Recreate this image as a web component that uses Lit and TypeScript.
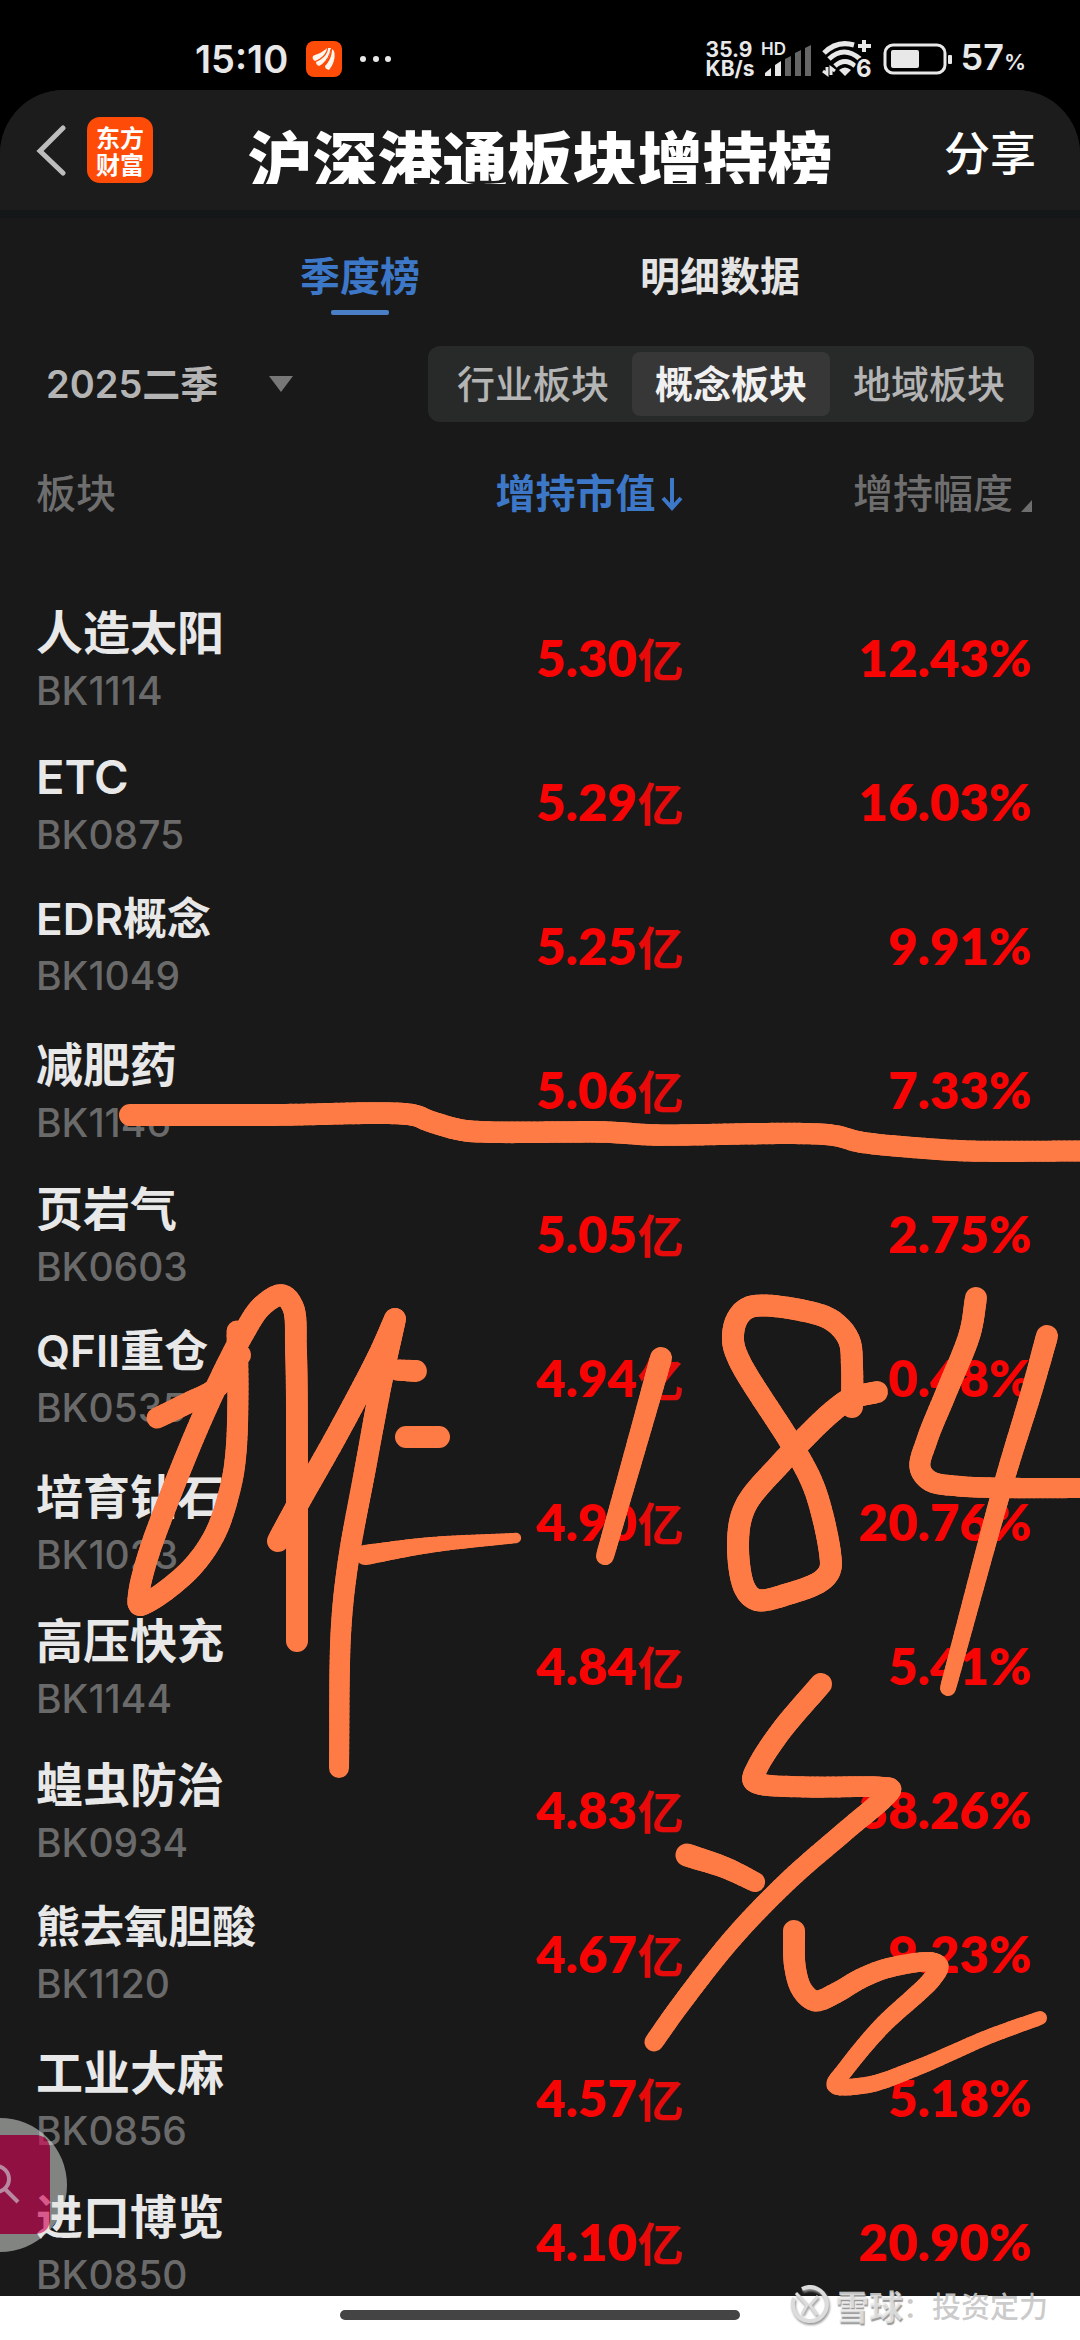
import { LitElement, html, css, svg } from "lit";
import { customElement, property, state } from "lit/decorators.js";
import { classMap } from "lit/directives/class-map.js";

interface Sector {
  name: string;
  code: string;
  value: string;
  percent: string;
}

const SECTORS: Sector[] = [
  { name: "人造太阳", code: "BK1114", value: "5.30", percent: "12.43%" },
  { name: "ETC", code: "BK0875", value: "5.29", percent: "16.03%" },
  { name: "EDR概念", code: "BK1049", value: "5.25", percent: "9.91%" },
  { name: "减肥药", code: "BK1146", value: "5.06", percent: "7.33%" },
  { name: "页岩气", code: "BK0603", value: "5.05", percent: "2.75%" },
  { name: "QFII重仓", code: "BK0535", value: "4.94", percent: "0.48%" },
  { name: "培育钻石", code: "BK1023", value: "4.90", percent: "20.76%" },
  { name: "高压快充", code: "BK1144", value: "4.84", percent: "5.41%" },
  { name: "蝗虫防治", code: "BK0934", value: "4.83", percent: "38.26%" },
  { name: "熊去氧胆酸", code: "BK1120", value: "4.67", percent: "9.23%" },
  { name: "工业大麻", code: "BK0856", value: "4.57", percent: "5.18%" },
  { name: "进口博览", code: "BK0850", value: "4.10", percent: "20.90%" },
];

type Point = [number, number];

interface InkStroke {
  from: number;
  to: number;
  points: Point[];
}

/* Pen strokes: width at both ends and the points the pen passes through. */
const INK: InkStroke[] = [
  { from: 22, to: 21, points: [[130, 1115], [270, 1115], [413, 1115], [429, 1121], [461, 1130], [486, 1132], [605, 1132], [622, 1133], [654, 1135], [831, 1135], [860, 1142], [919, 1148], [970, 1151], [1085, 1151]] },
  { from: 21, to: 22, points: [[237, 1331], [238, 1389], [236, 1452], [231, 1485], [216, 1532], [195, 1564], [169, 1588], [148, 1602], [139, 1605], [139, 1592], [148, 1556], [172, 1491], [207, 1407], [241, 1338], [262, 1306], [282, 1295], [293, 1307], [296, 1350], [297, 1480], [297, 1641]] },
  { from: 21, to: 22, points: [[157, 1418], [190, 1402], [215, 1389], [240, 1355]] },
  { from: 22, to: 22, points: [[395, 1319], [379, 1355], [338, 1433], [298, 1504], [278, 1541]] },
  { from: 22, to: 20, points: [[395, 1319], [382, 1379], [365, 1470], [348, 1563], [341, 1630], [339, 1768]] },
  { from: 21, to: 22, points: [[396, 1370], [416, 1371]] },
  { from: 22, to: 22, points: [[406, 1437], [439, 1437]] },
  { from: 20, to: 10, points: [[365, 1555], [430, 1545], [516, 1538]] },
  { from: 22, to: 18, points: [[661, 1358], [636, 1447], [605, 1556]] },
  { from: 22, to: 22, points: [[852, 1407], [852, 1367], [849, 1340], [833, 1321], [805, 1311], [750, 1307], [737, 1319], [733, 1340], [739, 1360], [795, 1450], [815, 1490], [830, 1553], [830, 1570], [821, 1581], [788, 1594], [757, 1600], [745, 1589], [738, 1543], [745, 1507], [781, 1463], [833, 1411], [852, 1398], [877, 1392]] },
  { from: 22, to: 20, points: [[976, 1298], [970, 1333], [946, 1393], [927, 1440], [920, 1468], [930, 1481], [957, 1486], [1015, 1488], [1086, 1488]] },
  { from: 22, to: 16, points: [[1047, 1336], [1032, 1390], [1004, 1482], [948, 1688]] },
  { from: 22, to: 19, points: [[821, 1684], [781, 1731], [758, 1766], [753, 1780], [760, 1784], [808, 1787], [880, 1787], [891, 1789], [884, 1798], [843, 1833], [788, 1881], [733, 1938], [678, 2008], [654, 2042]] },
  { from: 23, to: 20, points: [[687, 1855], [726, 1868], [755, 1882]] },
  { from: 22, to: 14, points: [[794, 1931], [795, 1967], [802, 1990], [815, 2001], [836, 1993], [860, 1979], [888, 1968], [932, 1962], [939, 1966], [932, 1979], [881, 2027], [845, 2070], [835, 2085], [867, 2085], [919, 2067], [988, 2037], [1040, 2018]] },
];

interface Segment {
  a: Point;
  b: Point;
  width: number;
}

/* Samples a smooth curve through the points and narrows it along the way. */
function inkSegments(stroke: InkStroke): Segment[] {
  const p = stroke.points;
  const n = p.length;
  const dist = (a: Point, b: Point) => Math.hypot(b[0] - a[0], b[1] - a[1]);
  const t: number[] = [0];
  for (let i = 1; i < n; i++) t.push(t[i - 1] + Math.sqrt(dist(p[i - 1], p[i])));
  const slope = (i: number, axis: number): number => {
    if (i === 0) return (p[1][axis] - p[0][axis]) / (t[1] - t[0]);
    if (i === n - 1) return (p[i][axis] - p[i - 1][axis]) / (t[i] - t[i - 1]);
    const h0 = t[i] - t[i - 1];
    const h1 = t[i + 1] - t[i];
    const s0 = (p[i][axis] - p[i - 1][axis]) / h0;
    const s1 = (p[i + 1][axis] - p[i][axis]) / h1;
    return (s0 * h1 + s1 * h0) / (h0 + h1);
  };
  const samples: Point[] = [p[0]];
  for (let i = 0; i < n - 1; i++) {
    const h = t[i + 1] - t[i];
    const steps = Math.max(4, Math.ceil(dist(p[i], p[i + 1]) / 5));
    for (let s = 1; s <= steps; s++) {
      const u = s / steps;
      const at = (axis: number) =>
        (2 * u ** 3 - 3 * u ** 2 + 1) * p[i][axis] +
        (u ** 3 - 2 * u ** 2 + u) * h * slope(i, axis) +
        (3 * u ** 2 - 2 * u ** 3) * p[i + 1][axis] +
        (u ** 3 - u ** 2) * h * slope(i + 1, axis);
      samples.push([at(0), at(1)]);
    }
  }
  const last = samples.length - 1;
  return samples.slice(1).map((b, i) => ({
    a: samples[i],
    b,
    width: stroke.from + ((stroke.to - stroke.from) * i) / last,
  }));
}

@customElement("status-bar")
export class StatusBar extends LitElement {
  static styles = css`
    :host {
      display: flex;
      justify-content: space-between;
      align-items: center;
      height: 90px;
      padding: 28px 54px 0 195px;
      box-sizing: border-box;
      color: #e8e8e8;
      font-family: Inter, "Noto Sans CJK SC", sans-serif;
    }
    .side {
      display: flex;
      align-items: center;
    }
    .time {
      font-size: 38px;
      line-height: 40px;
      font-weight: 600;
    }
    .app {
      margin: 0 17px 0 18px;
    }
    .speed {
      font-size: 21px;
      line-height: 19px;
      font-weight: 700;
    }
    .signal {
      margin: 0 9px 0 6px;
    }
    .battery {
      margin: 0 8px 0 11px;
    }
    .level {
      font-size: 36px;
      line-height: 40px;
      font-weight: 600;
    }
    .unit {
      font-size: 22px;
    }
    .hd {
      font: 600 17px Inter, sans-serif;
    }
    .six {
      font: 700 24px Inter, sans-serif;
    }
  `;

  render() {
    return html`
      <div class="side">
        <span class="time">15:10</span>
        <svg class="app" width="36" height="36" viewBox="0 0 36 36">
          <rect width="36" height="36" rx="8" fill="#ff4b08" />
          <path d="M7 15c4-2 9-3 14-8 0 5-6 11-12 13-2-1-3-3-2-5z" fill="#fff6ee" />
          <path d="M22 7l3 0c0 8-5 14-12 18-2-1-3-2-3-4 7-3 12-8 12-14z" fill="#fff6ee" />
          <path d="M26 8l2 2c2 7-1 14-5 19-3-1-4-2-4-4 4-4 7-10 7-17z" fill="#fff6ee" />
          <path d="M17 23c4-4 7-9 8-15" fill="none" stroke="#ff4b08" />
        </svg>
        <svg width="34" height="8" viewBox="0 0 34 8" fill="#e8e8e8">
          <circle cx="4" cy="4" r="3" />
          <circle cx="17" cy="4" r="3" />
          <circle cx="29" cy="4" r="3" />
        </svg>
      </div>
      <div class="side">
        <div class="speed">35.9<br />KB/s</div>
        <svg class="signal" width="52" height="38" viewBox="0 0 52 38" fill="#e8e8e8">
          <text class="hd" x="0" y="15">HD</text>
          <path d="M4 36v-3l6-5v8z" />
          <path d="M14 36V25l6-4v15z" />
          <g fill="#666">
            <path d="M24 36V19l6-3v20z" />
            <path d="M34 36V13l6-3v26z" />
            <path d="M44 36V8l6-3v31z" />
          </g>
        </svg>
        <svg width="50" height="40" viewBox="0 0 50 40" fill="none" stroke="#e8e8e8">
          <path d="M2 14q13-13 30-8" stroke-width="5" />
          <path d="M7 20q15-14 31 0" stroke-width="5" />
          <path d="M13 27q10-9 20 0" stroke-width="5" />
          <path d="M17 31q6-5 12 0l-6 6z" fill="#e8e8e8" stroke="none" />
          <path d="M42 1v12M36 7h13" stroke-width="4" />
          <path d="M5 28v7l-4-3M9 36v-7l4 3" stroke-width="3" />
          <text class="six" x="34" y="38" fill="#e8e8e8" stroke="#000" stroke-width="4" paint-order="stroke">6</text>
        </svg>
        <svg class="battery" width="70" height="32" viewBox="0 0 70 32">
          <rect x="2" y="2" width="60" height="28" rx="8" fill="none" stroke="#e8e8e8" stroke-width="3" />
          <rect x="8" y="7" width="28" height="18" rx="2" fill="#e8e8e8" />
          <rect x="65" y="12" width="4" height="9" rx="1" fill="#e8e8e8" />
        </svg>
        <span class="level">57<span class="unit">%</span></span>
      </div>
    `;
  }
}

@customElement("nav-header")
export class NavHeader extends LitElement {
  static styles = css`
    :host {
      display: grid;
      grid-template-columns: 1fr auto 1fr;
      align-items: center;
      height: 120px;
      padding: 0 36px;
      background: #1c1c1c;
      border-bottom: 8px solid #141717;
      font-family: "Noto Sans CJK SC", sans-serif;
      color: #fff;
    }
    button {
      background: none;
      border: 0;
      padding: 0;
      margin: 0;
      color: inherit;
      font-family: inherit;
      cursor: pointer;
    }
    .left {
      display: flex;
      align-items: center;
      gap: 18px;
    }
    .back {
      display: flex;
    }
    .brand {
      display: grid;
      place-content: center;
      width: 66px;
      height: 66px;
      border-radius: 13px;
      background: #ff4b08;
      color: #fff;
      font-size: 24px;
      line-height: 27px;
      font-weight: 700;
      text-decoration: none;
    }
    .title {
      height: 56px;
      margin: 12px 0 0;
      overflow: hidden;
      font-size: 65px;
      line-height: 60px;
      font-weight: 900;
    }
    .share {
      justify-self: end;
      padding-right: 8px;
      font-size: 46px;
      line-height: 56px;
      font-weight: 500;
    }
  `;

  @property() heading = "";

  render() {
    return html`
      <div class="left">
        <button class="back" aria-label="返回">
          <svg width="33" height="52" viewBox="0 0 33 52" fill="none" stroke="#bdbdbd" stroke-width="5" stroke-linecap="round">
            <path d="M27 4L4 27l23 22" />
          </svg>
        </button>
        <a class="brand" href="#"><span>东方</span><span>财富</span></a>
      </div>
      <h1 class="title">${this.heading}</h1>
      <button class="share">分享</button>
    `;
  }
}

@customElement("sector-table")
export class SectorTable extends LitElement {
  static styles = css`
    :host {
      display: block;
      padding: 0 48px 0 36px;
      font-family: Inter, "Noto Sans CJK SC", sans-serif;
    }
    table {
      width: 100%;
      table-layout: fixed;
      border-collapse: collapse;
    }
    th,
    td {
      padding: 0;
      text-align: right;
      font-weight: 500;
    }
    .first {
      width: 35%;
      text-align: left;
    }
    .second {
      width: 30%;
    }
    .head th {
      height: 144px;
      padding-bottom: 20px;
      color: #6e6e6e;
      font-size: 40px;
      line-height: 60px;
    }
    .sort {
      display: inline-flex;
      align-items: center;
      padding: 0;
      border: 0;
      background: none;
      color: inherit;
      font: inherit;
      cursor: pointer;
    }
    .sort.active {
      color: #3d78c8;
      font-weight: 700;
    }
    .arrow {
      margin-left: 6px;
    }
    .corner {
      align-self: flex-end;
      margin: 0 0 12px 8px;
    }
    .row td,
    .row th {
      height: 144px;
    }
    .row .first {
      vertical-align: top;
      box-sizing: border-box;
      padding-top: 17px;
    }
    .name {
      color: #e8e8e8;
      font-size: 47px;
      line-height: 60px;
      font-weight: 600;
    }
    .name.long {
      font-size: 44px;
      line-height: 57px;
    }
    .code {
      color: #6a6a6a;
      font-size: 39px;
      line-height: 56px;
    }
    .figure {
      color: #f70505;
      font-family: Lato, "Noto Sans CJK SC", sans-serif;
      font-size: 51px;
      line-height: 60px;
      font-weight: 800;
    }
    .unit {
      color: #e50b0b;
      font-family: "Noto Sans CJK SC", sans-serif;
      font-size: 46px;
      line-height: 56px;
      font-weight: 600;
    }
  `;

  @property({ attribute: false }) rows: Sector[] = [];

  render() {
    return html`
      <table>
        <thead>
          <tr class="head">
            <th class="first" scope="col">板块</th>
            <th class="second" scope="col" aria-sort="descending">
              <button class="sort active">
                增持市值
                <svg class="arrow" width="22" height="34" viewBox="0 0 22 34" fill="none" stroke="currentColor" stroke-width="4">
                  <path d="M11 1v29M2 21l9 10 9-10" />
                </svg>
              </button>
            </th>
            <th scope="col">
              <button class="sort">
                增持幅度
                <svg class="corner" width="11" height="12" viewBox="0 0 11 12" fill="currentColor">
                  <path d="M11 0v12H0z" />
                </svg>
              </button>
            </th>
          </tr>
        </thead>
        <tbody>
          ${this.rows.map(
            (row) => html`
              <tr class="row">
                <th class="first" scope="row">
                  <div class=${classMap({ name: true, long: row.name.length > 4 })}>${row.name}</div>
                  <div class="code">${row.code}</div>
                </th>
                <td class="figure">${row.value}<span class="unit">亿</span></td>
                <td class="figure">${row.percent}</td>
              </tr>
            `
          )}
        </tbody>
      </table>
    `;
  }
}

@customElement("ink-layer")
export class InkLayer extends LitElement {
  static styles = css`
    :host {
      display: block;
      pointer-events: none;
    }
    .sheet {
      display: block;
      width: 100%;
    }
  `;

  render() {
    return html`
      <svg class="sheet" viewBox="0 0 1080 2340" stroke="#ff7b45" stroke-linecap="round" aria-hidden="true">
        ${INK.flatMap(inkSegments).map(
          (s) => svg`<line x1=${s.a[0]} y1=${s.a[1]} x2=${s.b[0]} y2=${s.b[1]} stroke-width=${s.width} />`
        )}
      </svg>
    `;
  }
}

@customElement("app-root")
export class AppRoot extends LitElement {
  static styles = css`
    :host {
      position: relative;
      display: flex;
      flex-direction: column;
      height: 100vh;
      overflow: hidden;
      background: #000;
      font-family: Inter, "Noto Sans CJK SC", sans-serif;
    }
    button {
      border: 0;
      padding: 0;
      background: none;
      font-family: inherit;
      cursor: pointer;
    }
    .page {
      flex: 1;
      min-height: 0;
      overflow: hidden;
      border-radius: 64px 64px 0 0;
      background: #191919;
    }
    .tabs {
      display: grid;
      grid-template-columns: 1fr 1fr;
      padding: 29px 180px 0;
    }
    .tab {
      display: flex;
      flex-direction: column;
      align-items: center;
      gap: 3px;
      height: 68px;
      color: #e4e4e4;
      font-size: 40px;
      line-height: 60px;
      font-weight: 600;
    }
    .tab.active {
      color: #3d78c8;
      font-weight: 700;
    }
    .tab.active::after {
      content: "";
      width: 58px;
      height: 5px;
      border-radius: 2px;
      background: #4a7fc6;
    }
    .filters {
      display: flex;
      justify-content: space-between;
      align-items: center;
      padding: 31px 46px 0;
    }
    .period {
      display: flex;
      align-items: center;
    }
    .quarter {
      appearance: none;
      width: 223px;
      border: 0;
      padding: 0;
      background: none;
      color: #b4b4b4;
      font: 600 38px/60px Inter, "Noto Sans CJK SC", sans-serif;
    }
    .segments {
      display: grid;
      grid-template-columns: repeat(3, 1fr);
      flex: 0 0 606px;
      padding: 6px;
      box-sizing: border-box;
      border-radius: 12px;
      background: #282a2a;
    }
    .segment {
      height: 64px;
      border-radius: 8px;
      color: #b4b4b4;
      font-size: 38px;
      line-height: 60px;
      font-weight: 500;
    }
    .segment.active {
      background: #373737;
      color: #f0f0f0;
      font-weight: 700;
    }
    .home {
      display: flex;
      justify-content: center;
      flex: none;
      height: 30px;
      padding-top: 14px;
      background: #fff;
    }
    .pill {
      width: 37%;
      height: 10px;
      border-radius: 5px;
      background: #444;
    }
    .ink {
      position: absolute;
      top: 0;
      left: 0;
      width: 100%;
    }
    .finder {
      position: absolute;
      left: 0;
      bottom: 88px;
      display: flex;
    }
    .mark {
      position: absolute;
      right: 32px;
      bottom: 12px;
      display: flex;
      align-items: center;
      gap: 5px;
      height: 46px;
      color: rgba(198, 198, 198, 0.92);
      font-size: 29px;
      font-weight: 500;
    }
    .logo {
      filter: drop-shadow(1px 2px 1px #999);
    }
    .site {
      color: rgba(235, 235, 235, 0.8);
      font-size: 34px;
      font-weight: 700;
      text-shadow: 1px 2px 1px #999;
    }
    .handle {
      display: flex;
      align-items: center;
    }
  `;

  @state() private tab = 0;
  @state() private board = 1;

  render() {
    return html`
      <status-bar></status-bar>
      <main class="page">
        <nav-header heading="沪深港通板块增持榜"></nav-header>
        <div class="tabs" role="tablist">
          ${["季度榜", "明细数据"].map(
            (label, i) => html`
              <button
                class=${classMap({ tab: true, active: i === this.tab })}
                role="tab"
                aria-selected=${i === this.tab}
                @click=${() => (this.tab = i)}
              >
                ${label}
              </button>
            `
          )}
        </div>
        <div class="filters">
          <div class="period">
            <select class="quarter" aria-label="季度">
              <option>2025二季</option>
            </select>
            <svg width="24" height="16" viewBox="0 0 24 16" fill="#777"><path d="M0 0h24L12 16z" /></svg>
          </div>
          <div class="segments">
            ${["行业板块", "概念板块", "地域板块"].map(
              (label, i) => html`
                <button
                  class=${classMap({ segment: true, active: i === this.board })}
                  aria-pressed=${i === this.board}
                  @click=${() => (this.board = i)}
                >
                  ${label}
                </button>
              `
            )}
          </div>
        </div>
        <sector-table .rows=${SECTORS}></sector-table>
      </main>
      <footer class="home"><div class="pill"></div></footer>
      <button class="finder" aria-label="搜索">
        <svg width="68" height="134" viewBox="0 0 68 134">
          <path
            fill-rule="evenodd"
            fill="rgba(225,230,225,0.52)"
            d="M0 0A67 67 0 0 1 0 134zM0 17V116H34Q50 116 50 100V33Q50 17 34 17z"
          />
          <path fill="rgba(209,13,88,0.65)" d="M0 17H34Q50 17 50 33V100Q50 116 34 116H0z" />
          <g fill="none" stroke="#b888a0" stroke-width="4">
            <circle cx="-4" cy="61" r="13" />
            <path d="M5 71l13 13" />
          </g>
        </svg>
      </button>
      <ink-layer class="ink"></ink-layer>
      <div class="mark">
        <svg class="logo" width="40" height="40" viewBox="0 0 40 40" fill="none" stroke="#dcdcdc" stroke-width="4">
          <path d="M12 4A17 17 0 1 1 4 13" />
          <path d="M6 8l11 12-5 9M28 11l-8 9 7 10" stroke-width="3" />
        </svg>
        <span class="handle"><span class="site">雪球</span><span>：投资定力</span></span>
      </div>
    `;
  }
}
